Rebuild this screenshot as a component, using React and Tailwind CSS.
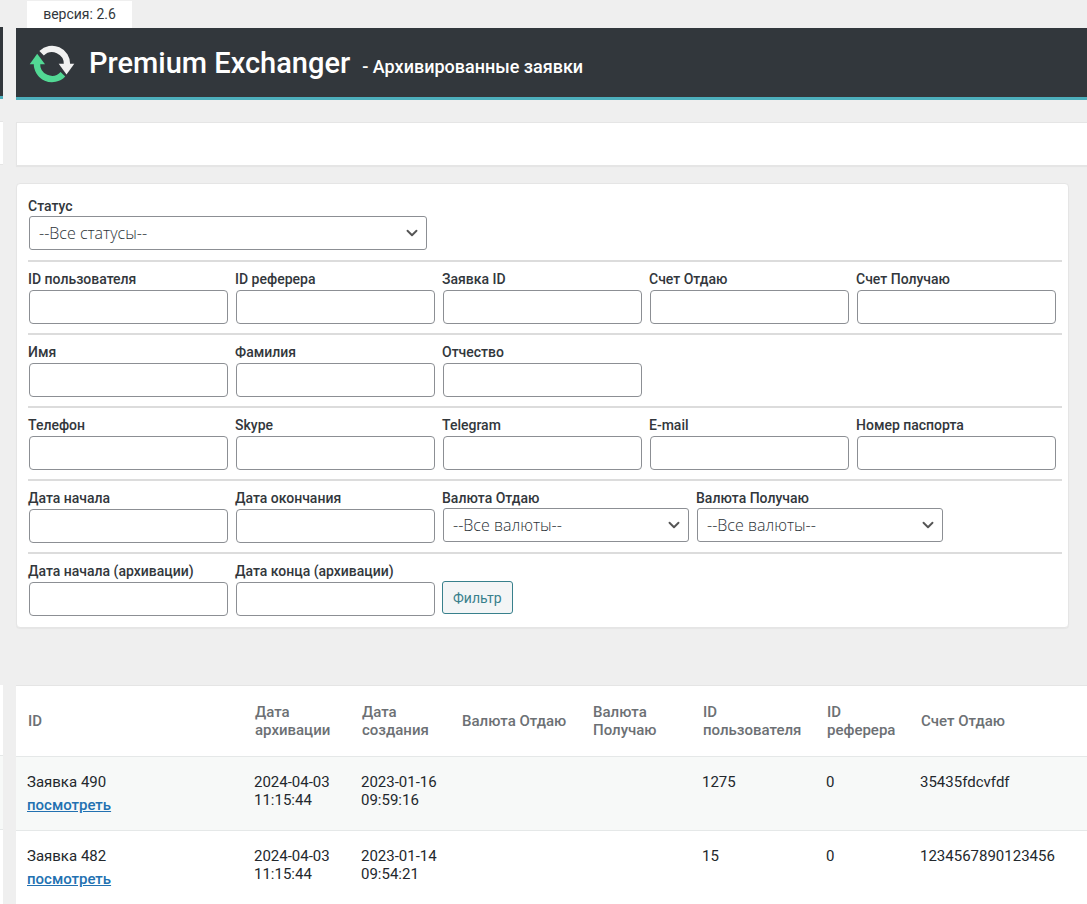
import React from "react";
import { ChevronDown } from "lucide-react";

function Logo() {
  return (
    <svg className="h-[44px] w-[46px] shrink-0" viewBox="0 0 46 44" aria-hidden="true">
      <path d="M12.6 12.2 A15 15 0 0 1 38 23.5" fill="none" stroke="#f1f1f1" strokeWidth="6.4" />
      <path d="M29.7 22.8 L45.3 22.8 L37.5 33.4 Z" fill="#f1f1f1" />
      <path d="M8 22 A15 15 0 0 0 33.9 33.2" fill="none" stroke="#52d894" strokeWidth="6.4" />
      <path d="M0.7 23.2 L16 23.2 L8.2 12.8 Z" fill="#52d894" />
    </svg>
  );
}

function TextField({ id, label }) {
  return (
    <div className="flex w-[200px] flex-col">
      <label htmlFor={id} className="text-sm leading-5 font-medium whitespace-nowrap">
        {label}
      </label>
      <input
        id={id}
        type="text"
        className="mt-px ml-px h-[34px] rounded border border-[#8c8f94] bg-white px-2 text-sm"
      />
    </div>
  );
}

function SelectField({ id, label, option, wide }) {
  return (
    <div className={wide ? "flex w-[399px] flex-col" : "flex w-[247px] flex-col"}>
      <label htmlFor={id} className="text-sm leading-5 font-medium whitespace-nowrap">
        {label}
      </label>
      <div className="relative ml-px">
        <select
          id={id}
          className="block h-[34px] w-full appearance-none rounded-[3px] border border-[#8c8f94] bg-white pr-6 pl-[9px] font-['Open_Sans',sans-serif] text-base font-light text-[#2c3338]"
        >
          <option>{option}</option>
        </select>
        <ChevronDown
          className="pointer-events-none absolute top-2 right-[6px] text-[#555]"
          size={18}
          strokeWidth={2.5}
          aria-hidden="true"
        />
      </div>
    </div>
  );
}

const textRows = [
  [
    ["user-id", "ID пользователя"],
    ["ref-id", "ID реферера"],
    ["bid-id", "Заявка ID"],
    ["account-give", "Счет Отдаю"],
    ["account-get", "Счет Получаю"],
  ],
  [
    ["first-name", "Имя"],
    ["last-name", "Фамилия"],
    ["second-name", "Отчество"],
  ],
  [
    ["phone", "Телефон"],
    ["skype", "Skype"],
    ["telegram", "Telegram"],
    ["email", "E-mail"],
    ["passport", "Номер паспорта"],
  ],
];

const rowClass = "flex flex-wrap gap-x-[7px] border-b-2 border-[#dcdcdc] pt-[7px] pb-[9px]";

function Filters() {
  return (
    <form
      className="mt-[17px] mr-[18px] rounded border border-[#e5e5e5] bg-white pt-3 pr-[6px] pb-[11px] pl-[11px] text-[#32373c] shadow-[0_1px_1px_rgba(0,0,0,0.04)]"
      onSubmit={(e) => e.preventDefault()}
    >
      <div className="border-b-2 border-[#dcdcdc] pb-[10px]">
        <SelectField id="status" label="Статус" option="--Все статусы--" wide />
      </div>
      {textRows.map((row) => (
        <div key={row[0][0]} className={rowClass}>
          {row.map(([id, label]) => (
            <TextField key={id} id={id} label={label} />
          ))}
        </div>
      ))}
      <div className={rowClass}>
        <TextField id="date-start" label="Дата начала" />
        <TextField id="date-end" label="Дата окончания" />
        <SelectField id="currency-give" label="Валюта Отдаю" option="--Все валюты--" />
        <SelectField id="currency-get" label="Валюта Получаю" option="--Все валюты--" />
      </div>
      <div className="flex flex-wrap items-end gap-x-[7px] pt-[7px]">
        <TextField id="archive-start" label="Дата начала (архивации)" />
        <TextField id="archive-end" label="Дата конца (архивации)" />
        <button
          type="submit"
          className="mb-[2px] h-[33px] rounded-[3px] border border-[#38808c] bg-[#f3f5f6] px-[10px] text-sm text-[#38808c]"
        >
          Фильтр
        </button>
      </div>
    </form>
  );
}

const headings = [
  "ID",
  "Дата архивации",
  "Дата создания",
  "Валюта Отдаю",
  "Валюта Получаю",
  "ID пользователя",
  "ID реферера",
  "Счет Отдаю",
];

const bids = [
  { id: 490, archived: "2024-04-03 11:15:44", created: "2023-01-16 09:59:16", user: "1275", ref: "0", account: "35435fdcvfdf" },
  { id: 482, archived: "2024-04-03 11:15:44", created: "2023-01-14 09:54:21", user: "15", ref: "0", account: "1234567890123456" },
];

function BidsTable() {
  return (
    <table className="mt-[57px] w-full table-fixed border-t border-[#e5e5e5] bg-white text-left text-[15px] leading-[18px]">
      <colgroup>
        <col className="w-[227px]" />
        <col className="w-[107px]" />
        <col className="w-[100px]" />
        <col className="w-[131px]" />
        <col className="w-[110px]" />
        <col className="w-[124px]" />
        <col className="w-[94px]" />
        <col />
      </colgroup>
      <thead>
        <tr className="h-[71px] text-[#6c7074]">
          {headings.map((h) => (
            <th key={h} scope="col" className="pl-3 font-medium">
              {h}
            </th>
          ))}
        </tr>
      </thead>
      <tbody>
        {bids.map((b) => (
          <tr key={b.id} className="border-t border-[#e5e8e8] align-top text-[#23282d] odd:bg-[#f7f9f8] [&>td]:py-4 [&>td]:pl-[11px]">
            <td>
              <div>Заявка {b.id}</div>
              <a href={"#bid-" + b.id} className="mt-[5px] block font-medium text-[#2271b1] underline">
                посмотреть
              </a>
            </td>
            <td className="pr-4">{b.archived}</td>
            <td className="pr-2">{b.created}</td>
            <td></td>
            <td></td>
            <td>{b.user}</td>
            <td>{b.ref}</td>
            <td>{b.account}</td>
          </tr>
        ))}
      </tbody>
    </table>
  );
}

export default function App() {
  return (
    <div className="flex min-h-screen gap-[13px] bg-[#efefef] font-[Roboto,sans-serif]">
      <div className="flex w-[3px] shrink-0 flex-col pt-[27px]" aria-hidden="true">
        <div className="h-[72px] border-b-[3px] border-[#4dafbc] bg-[#32373c]" />
        <div className="mt-[22px] h-[44px] border-y border-[#e5e5e5] bg-white" />
        <div className="mt-[520px] h-[70px] bg-white" />
        <div className="h-[74px] border-t border-[#e5e8e8] bg-[#f7f9f8]" />
        <div className="flex-1 border-t border-[#e5e8e8] bg-white" />
      </div>
      <main className="min-w-0 flex-1">
        <div className="mt-px ml-[11px] h-[27px] w-[105px] bg-white text-center text-sm leading-[27px] text-[#32373c]">
          версия: 2.6
        </div>
        <header className="flex h-[72px] items-center gap-[14px] border-b-[3px] border-[#4dafbc] bg-[#32373c] pl-[13px] text-white">
          <Logo />
          <h1 className="flex items-baseline gap-[12px] text-[29px] leading-[36px] font-medium">
            Premium Exchanger
            <span className="text-lg font-medium">- Архивированные заявки</span>
          </h1>
        </header>
        <div className="mt-[22px] h-[44px] border border-r-0 border-[#e5e5e5] bg-white shadow-[0_1px_1px_rgba(0,0,0,0.04)]" />
        <Filters />
        <BidsTable />
      </main>
    </div>
  );
}
